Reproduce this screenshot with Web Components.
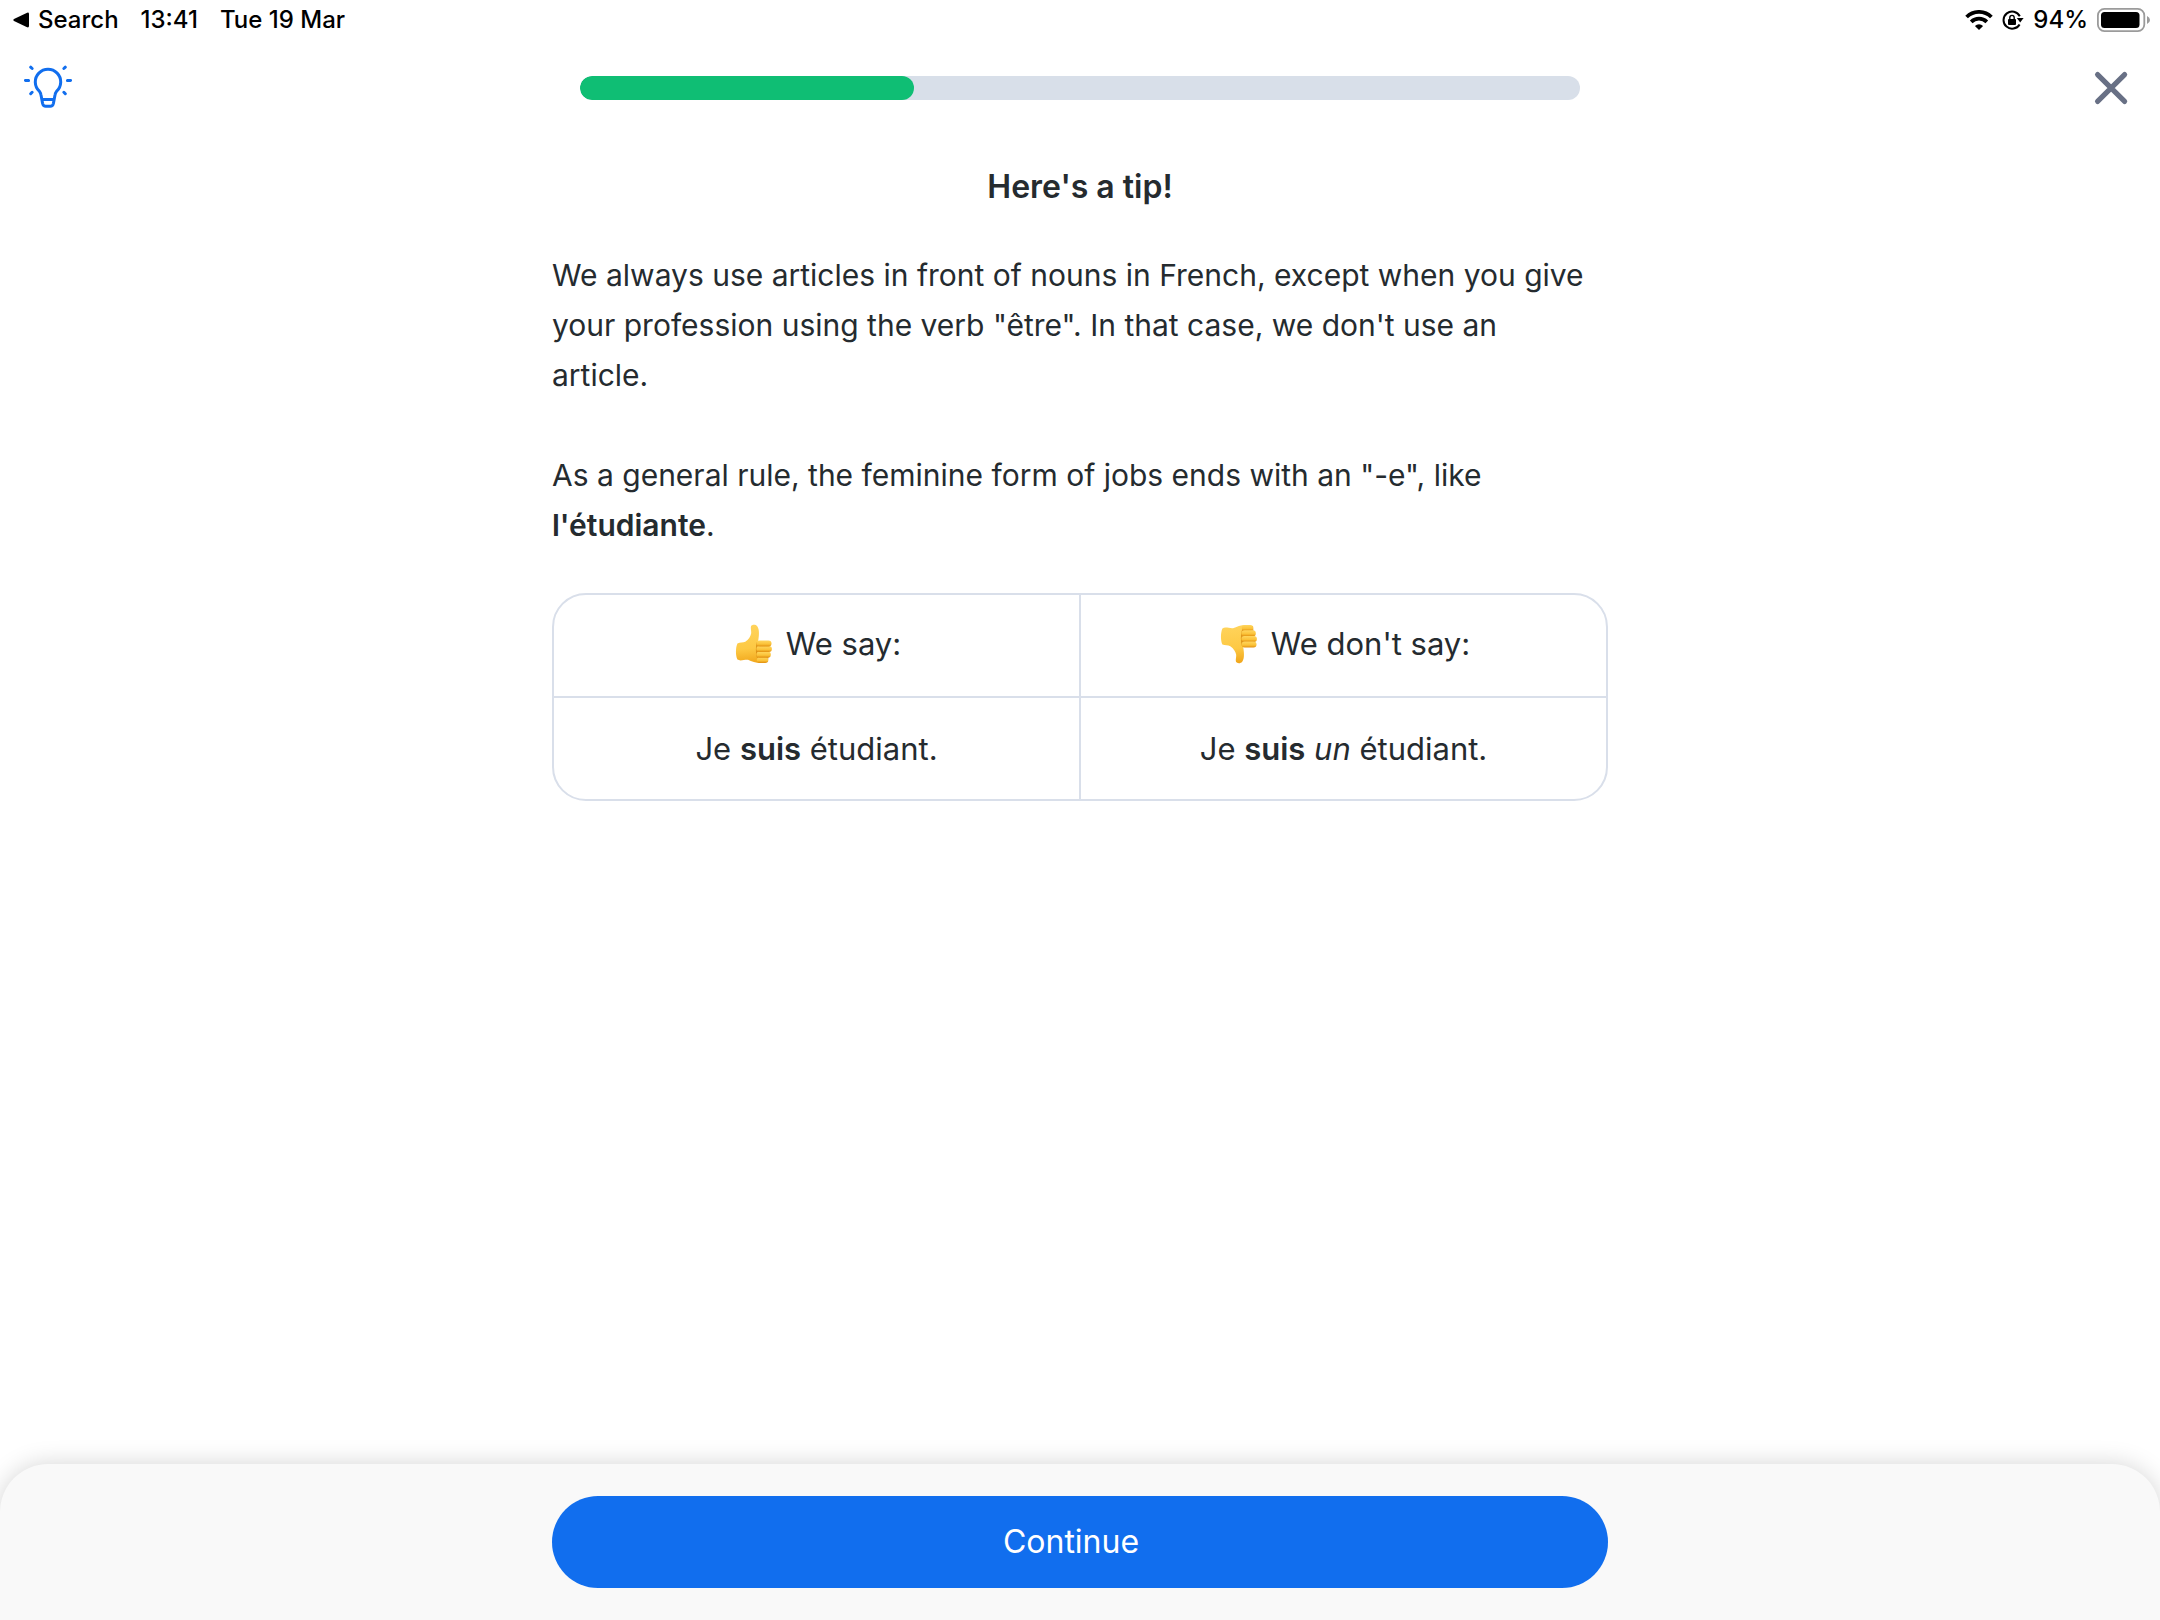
<!DOCTYPE html>
<html lang="en">
<head>
<meta charset="utf-8">
<meta name="viewport" content="width=device-width, initial-scale=1">
<title>Lesson tip</title>
<style>
  body { margin: 0; background: #fff; color: #252b2f; font-family: Inter, "Liberation Sans", sans-serif; font-size: 30px; line-height: 50px; }
  strong { font-weight: 600; }
  p { margin: 0; }
</style>
</head>
<body>
<lesson-screen>
  <status-bar slot="top" time="13:41" date="Tue 19 Mar" battery="94"></status-bar>
  <lesson-header slot="top" value="33.4"></lesson-header>
  <tip-article>
    <span slot="title">Here's a tip!</span>
    <p>We always use articles in front of nouns in French, except when you give your profession using the verb "être". In that case, we don't use an article.</p>
    <p>As a general rule, the feminine form of jobs ends with an "-e", like <strong>l'étudiante</strong>.</p>
    <say-table slot="example">
      <span slot="good">Je <strong>suis</strong> étudiant.</span>
      <span slot="bad">Je <strong>suis</strong> <em>un</em> étudiant.</span>
    </say-table>
  </tip-article>
  <action-bar slot="bottom">Continue</action-bar>
</lesson-screen>
<script>
const define = (name, render) => customElements.define(name, class extends HTMLElement {
  constructor() {
    super();
    this.attachShadow({ mode: "open" });
  }
  connectedCallback() {
    this.shadowRoot.innerHTML = render(this);
  }
});

define("lesson-screen", () => `
  <style>
    :host { display: flex; flex-direction: column; min-height: 100vh; overflow: hidden; }
    main { flex: 1; padding: 26px 24px 48px; }
  </style>
  <slot name="top"></slot>
  <main><slot></slot></main>
  <slot name="bottom"></slot>`);

define("status-bar", el => `
  <style>
    :host { display: flex; justify-content: space-between; align-items: center; height: 40px; padding: 0 10px 0 13px; color: #000; font-size: 24px; line-height: 40px; font-weight: 500; }
    div { display: flex; align-items: center; gap: 22px; }
    .status { gap: 9px; }
    button { display: flex; align-items: center; gap: 9px; padding: 0; border: 0; background: none; color: inherit; font: inherit; }
    svg { display: block; flex: none; }
  </style>
  <div>
    <button type="button"><svg width="16" height="16" viewBox="0 0 16 16" aria-hidden="true"><path d="M1 7.1 13.6.9Q16 0 16 2V14Q16 16 13.6 15.1L1 8.9Q-.4 8 1 7.1Z"/></svg>Search</button>
    <span>${el.getAttribute("time")}</span>
    <span>${el.getAttribute("date")}</span>
  </div>
  <div class="status">
    <svg width="28" height="20" viewBox="0 0 28 20" aria-hidden="true">
      <path d="M1.6 7A17.6 17.6 0 0 1 26.4 7M6.2 11.8A11.2 11.2 0 0 1 21.8 11.8" fill="none" stroke="#000" stroke-width="3.8"/>
      <path d="M14 20 9.9 15.9A6 6 0 0 1 18.1 15.9Z"/>
    </svg>
    <svg width="22" height="20" viewBox="0 0 22 20" aria-hidden="true">
      <path d="M17.6 14.4A8.6 8.6 0 1 1 17.8 6.2" fill="none" stroke="#000" stroke-width="2"/>
      <path d="M14.8 8H21.6L18.2 12.4Z"/>
      <rect x="6" y="9" width="8" height="6" rx="1"/>
      <path d="M7.8 9.4V7.6A2.2 2.2 0 0 1 12.2 7.6V9.4" fill="none" stroke="#000" stroke-width="1.4"/>
    </svg>
    <span>${el.getAttribute("battery")}%</span>
    <svg width="53" height="24" viewBox="0 0 53 24" aria-hidden="true">
      <rect x=".9" y=".9" width="46.4" height="22.2" rx="6.5" fill="none" stroke="#9b9b9b" stroke-width="1.8"/>
      <rect x="4" y="4" width="38.5" height="16" rx="3.5"/>
      <path d="M50 8Q53 9.3 53 12T50 16Z" fill="#9b9b9b"/>
    </svg>
  </div>`);

define("lesson-header", el => `
  <style>
    :host { display: flex; justify-content: space-between; align-items: center; height: 96px; padding: 0 24px; gap: 24px; }
    button { padding: 0; border: 0; background: none; }
    svg { display: block; fill: none; stroke-linecap: round; stroke-linejoin: round; }
    .track { flex: 0 1 1000px; height: 24px; border-radius: 12px; background: #d8dfe9; overflow: hidden; }
    .fill { width: ${el.getAttribute("value")}%; height: 100%; border-radius: 12px; background: #0fbe74; }
  </style>
  <button type="button" aria-label="Show tips">
    <svg width="48" height="48" viewBox="0 0 48 48" stroke="#116eee" stroke-width="3">
      <path d="M15.5 27.4A12.7 12.7 0 1 1 32.5 27.4Q31.3 28.8 31 31L29.4 39.5Q28.8 42.3 26.2 42.3H21.8Q19.2 42.3 18.6 39.5L17 31Q16.7 28.8 15.5 27.4ZM18 35.5H30M1.4 16.4H4.6M43.4 16.4H46.6M6.7 3.2 8.1 4.5M41.3 3.2 39.9 4.5M8.1 28.3 6.7 29.7M39.9 28.3 41.3 29.7"/>
    </svg>
  </button>
  <div class="track" role="progressbar" aria-label="Lesson progress" aria-valuenow="${el.getAttribute("value")}"><div class="fill"></div></div>
  <button type="button" aria-label="Close">
    <svg width="48" height="48" viewBox="0 0 48 48" stroke="#687085" stroke-width="5.2"><path d="M9.6 10.6 36.6 37.4M36.6 10.6 9.6 37.4"/></svg>
  </button>`);

define("tip-article", () => `
  <style>
    :host { display: block; max-width: 1056px; margin: 0 auto; }
    h1 { margin: 0 0 38px; font-size: 32px; line-height: 50px; font-weight: 600; text-align: center; }
    .copy { display: flex; flex-direction: column; gap: 50px; margin-bottom: 43px; padding-right: 12px; }
  </style>
  <h1><slot name="title"></slot></h1>
  <div class="copy"><slot></slot></div>
  <slot name="example"></slot>`);

define("thumb-icon", el => {
  const down = el.hasAttribute("down");
  const from = down ? 44 : 0, to = 44 - from;
  return `
  <style>
    :host { display: inline-block; width: 44px; height: 44px; }
    svg { display: block; }
  </style>
  <svg width="44" height="44" viewBox="0 0 44 44" aria-hidden="true">
    <defs>
      <linearGradient id="skin" gradientUnits="userSpaceOnUse" x1="16" y1="${from}" x2="20" y2="${to}">
        <stop offset=".1" stop-color="#ffd35a"/><stop offset=".6" stop-color="#fdc944"/><stop offset="1" stop-color="#ee9f12"/>
      </linearGradient>
      <linearGradient id="finger" x1="0" y1="${down ? 1 : 0}" x2="0" y2="${down ? 0 : 1}">
        <stop offset="0" stop-color="#ffd65f"/><stop offset=".6" stop-color="#fbc238"/><stop offset="1" stop-color="#e08c0c"/>
      </linearGradient>
    </defs>
    <g ${down ? 'transform="matrix(1 0 0 -1 0 44)"' : ""}>
      <path fill="url(#skin)" d="M5.4 21.4C8 20.5 11 20.8 13.3 19.8C16.5 17.6 18.7 14.5 19.2 11.3C19.4 9 18.4 6 19 4.3C19.8 2.6 23.4 2.1 25.2 4.3C27 6.5 27.6 11.4 26.2 18.8L31 23V39L28.5 41C24 41 19.5 39.2 16 37.7C12.5 37.3 8.5 39.5 5.4 37.6C3.4 33 3.6 25.5 5.4 21.4Z"/>
      <path fill="#d07f08" opacity=".7" d="M24.6 20.5C23.4 26 23.6 34 26.2 39.4L36 40L38 20Z"/>
      <g fill="url(#finger)">
        <rect x="24.8" y="35" width="11.4" height="6" rx="2.9"/>
        <rect x="24.5" y="29.6" width="14.3" height="6.1" rx="3"/>
        <rect x="24.4" y="24" width="15.5" height="6.1" rx="3"/>
        <rect x="24.6" y="18.4" width="14.9" height="6.2" rx="3"/>
      </g>
    </g>
  </svg>`;
});

define("say-table", () => `
  <style>
    :host { display: block; font-size: 31px; }
    table { width: 100%; table-layout: fixed; border-collapse: separate; border-spacing: 0; border: 2px solid #d9dfea; border-radius: 34px; }
    th, td { height: 101px; box-sizing: border-box; padding: 0 16px; border: 0 solid #d9dfea; font-weight: 400; text-align: center; vertical-align: middle; }
    th { height: 103px; padding-bottom: 4px; border-bottom-width: 2px; }
    :is(th, td):first-child { border-right-width: 1px; }
    :is(th, td):last-child { border-left-width: 1px; }
    .label { display: flex; justify-content: center; align-items: center; gap: 10px; }
  </style>
  <table>
    <thead><tr>
      <th scope="col"><div class="label"><thumb-icon></thumb-icon><span>We say:</span></div></th>
      <th scope="col"><div class="label"><thumb-icon down></thumb-icon><span>We don't say:</span></div></th>
    </tr></thead>
    <tbody><tr>
      <td><slot name="good"></slot></td>
      <td><slot name="bad"></slot></td>
    </tr></tbody>
  </table>`);

define("action-bar", () => `
  <style>
    :host { display: block; padding: 32px 24px; border-radius: 48px 48px 0 0; background: #f9f9f9; box-shadow: 0 0 24px rgba(0, 0, 0, .17); }
    button { display: block; box-sizing: border-box; width: 100%; max-width: 1056px; height: 92px; margin: 0 auto; padding: 0 18px 0 0; border: 0; border-radius: 46px; background: #116eee; color: #fff; font: inherit; font-size: 32px; }
  </style>
  <button type="button"><slot></slot></button>`);
</script>
</body>
</html>
